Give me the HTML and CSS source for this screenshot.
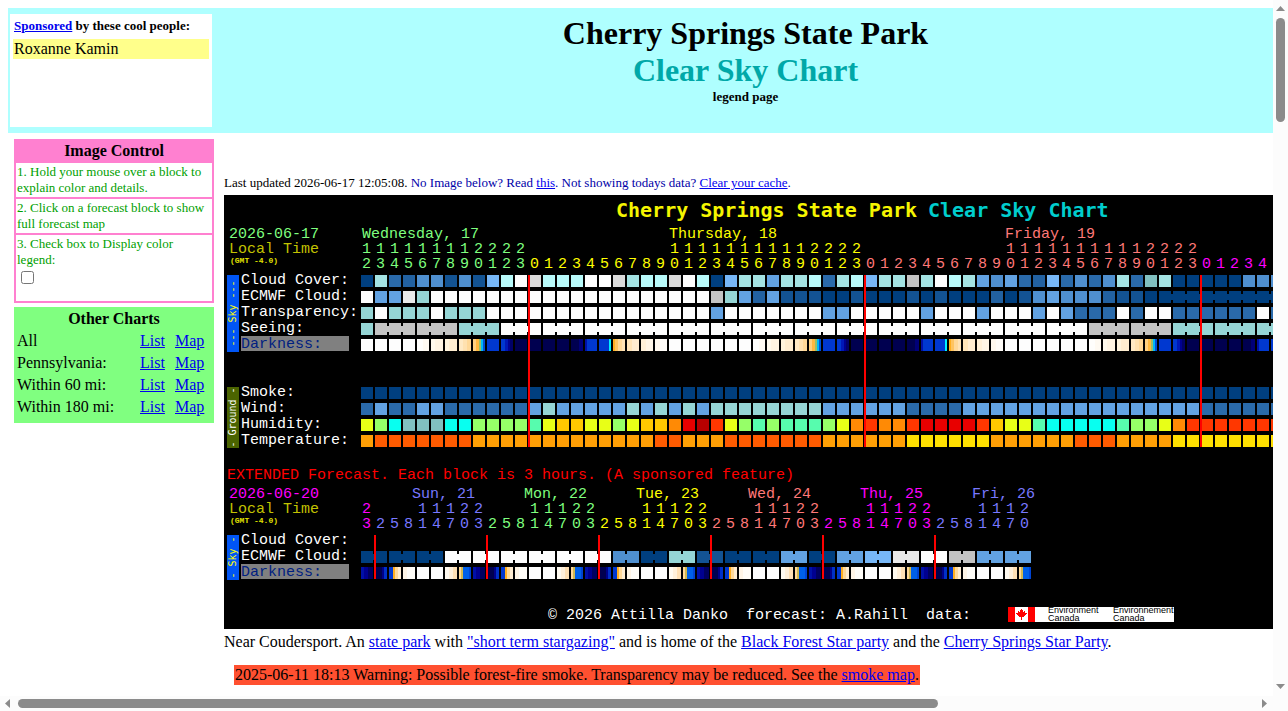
FILE: index.html
```html
<!DOCTYPE html>
<html lang="en">
<head>
<meta charset="utf-8">
<title>Cherry Springs State Park Clear Sky Chart</title>
<link rel="stylesheet" href="styles.css">
</head>
<body>
<div class="window">
  <div class="page">
    <header class="banner">
      <section class="sponsors">
        <p class="sponsors-title"><a href="#">Sponsored</a> by these cool people:</p>
        <p class="sponsor">Roxanne Kamin</p>
      </section>
      <div class="heading">
        <h1>Cherry Springs State Park<br><span class="teal">Clear Sky Chart</span></h1>
        <p class="legend">legend page</p>
      </div>
    </header>
    <div class="columns">
      <aside class="side">
        <section class="control">
          <h2>Image Control</h2>
          <p class="step">1. Hold your mouse over a block to explain color and details.</p>
          <p class="step">2. Click on a forecast block to show full forecast map</p>
          <div class="step step-check">
            <label for="legend">3. Check box to Display color legend:</label>
            <input type="checkbox" id="legend">
          </div>
        </section>
        <section class="charts">
          <h2>Other Charts</h2>
          <table>
            <tr><td>All</td><td><a href="#">List</a></td><td><a href="#">Map</a></td></tr>
            <tr><td>Pennsylvania:</td><td><a href="#">List</a></td><td><a href="#">Map</a></td></tr>
            <tr><td>Within 60 mi:</td><td><a href="#">List</a></td><td><a href="#">Map</a></td></tr>
            <tr><td>Within 180 mi:</td><td><a href="#">List</a></td><td><a href="#">Map</a></td></tr>
          </table>
        </section>
      </aside>
      <main class="main">
        <p class="updated">Last updated 2026-06-17 12:05:08. <span class="hint">No Image below? Read <a href="#">this</a>. Not showing todays data? <a href="#">Clear your cache</a>.</span></p>
        <svg class="chart" id="chart" width="1490" height="434" role="img" aria-label="Clear Sky Chart"></svg>
        <p class="about">Near Coudersport. An <a href="#">state park</a> with <a href="#">"short term stargazing"</a> and is home of the <a href="#">Black Forest Star party</a> and the <a href="#">Cherry Springs Star Party</a>.</p>
        <p class="warning">2025-06-11 18:13 Warning: Possible forest-fire smoke. Transparency may be reduced. See the <a href="#">smoke map</a>.</p>
      </main>
    </div>
  </div>
  <div class="bar bar-v">
    <svg width="15" height="15"><path d="M3 11L7.500 6L12 11Z"/></svg>
    <div class="track"><div class="thumb"></div></div>
    <svg width="15" height="15"><path d="M3 3L12 3L7.500 8Z"/></svg>
  </div>
  <div class="bar bar-h">
    <svg width="15" height="15"><path d="M10 3L5 7.500L10 12Z"/></svg>
    <div class="track"><div class="thumb"></div></div>
    <svg width="15" height="15"><path d="M4 3L9 7.500L4 12Z"/></svg>
  </div>
  <div class="corner"></div>
</div>
<script src="chart.js"></script>
</body>
</html>
```

FILE: styles.css
```css
* { box-sizing: border-box; }
body {
  margin: 0;
  font-family: "Liberation Serif", serif;
  font-size: 16px;
  line-height: 18px;
  color: #000;
  background: #fff;
}
p, h1, h2 { margin: 0; }
h2 { font-size: 16px; text-align: center; }
a { color: #00e; }

.window {
  display: grid;
  grid-template-columns: minmax(0, 1fr) 15px;
  grid-template-rows: minmax(0, 1fr) 15px;
  height: 100vh;
}
.page { overflow: hidden; padding: 8px 0 0 8px; }

.banner {
  display: flex;
  min-height: 125px;
  background: #afffff;
  padding: 6px 0 6px 2px;
}
.sponsors {
  flex: none;
  width: 202px;
  background: #fff;
  padding: 3px;
}
.sponsors-title { font-size: 13px; font-weight: bold; padding: 0 1px 4px; }
.sponsor { background: #ffff8b; padding: 1px; }
.heading { flex: 1; text-align: center; padding: 1px 0 0 6px; }
h1 { font-size: 32px; line-height: 37px; }
.teal { color: #00a8a8; }
.legend { font-size: 13px; font-weight: bold; line-height: 16px; }

.columns { display: flex; padding-left: 6px; }
.side { flex: none; width: 200px; padding-top: 6px; }
.control {
  display: flex;
  flex-direction: column;
  gap: 2px;
  background: #ff80d0;
  padding: 2px;
}
.control h2 { line-height: 20px; }
.step {
  background: #fff;
  color: #00a000;
  font-size: 13px;
  line-height: 16px;
  padding: 1px;
}
.step-check { display: flex; flex-direction: column; align-items: flex-start; min-height: 66px; }
.step-check input { margin: 3px 4px; width: 13px; height: 13px; }
.charts { margin-top: 4px; background: #80ff80; padding: 3px 2px 5px; }
.charts table { width: 100%; border-spacing: 0; }
.charts h2 { padding-bottom: 2px; }
.charts td { padding: 2px 1px; height: 22px; }
.charts td:nth-child(2) { width: 35px; }
.charts td:nth-child(3) { width: 38px; }

.main { flex: 1; min-width: 0; padding: 41px 0 0 10px; }
.updated { font-size: 13px; padding-bottom: 3px; white-space: nowrap; }
.hint { color: #0000a8; }
.chart { display: block; background: #000; }
.about { padding-top: 4px; white-space: nowrap; }
.warning {
  width: fit-content;
  margin: 14px 0 0 10px;
  padding: 1px;
  background: #ff5030;
  white-space: nowrap;
}

.chart text {
  font-family: "Liberation Mono", monospace;
  font-size: 15px;
  white-space: pre;
}
.chart .title { font-family: "DejaVu Sans Mono", monospace; font-size: 20px; font-weight: bold; }
.chart .zone { font-size: 8px; font-weight: bold; }
.chart .side-label { font-family: "DejaVu Sans Mono", monospace; font-size: 10px; text-anchor: middle; }
.chart .agency { font-family: "Liberation Sans", sans-serif; font-size: 9px; }

.bar { display: flex; background: #fcfcfc; }
.bar svg { flex: none; fill: #8b8b8b; }
.bar .track { flex: 1; display: flex; padding: 3px; }
.bar-v { flex-direction: column; }
.bar-v .track { flex-direction: column; }
.thumb { background: #8b8b8b; border-radius: 5px; }
.bar-v .thumb { height: 15.8%; }
.bar-h .thumb { width: 74.4%; }
.corner { background: #fcfcfc; }
```

FILE: chart.js
```js
const chart = document.getElementById("chart");
const NS = "http://www.w3.org/2000/svg";

const GREEN = "#7fff7f", YELLOW = "#ffff00", SALMON = "#ff7878";
const MAGENTA = "#ff00ff", BLUE = "#7878ff", OLIVE = "#c3c300";

const COLORS = {
  a: "#003f7f", b: "#135393", s: "#2261a1", c: "#2a6aaa", d: "#4f8fcf",
  e: "#62a2e2", f: "#77b7f7", g: "#95d5d5", h: "#a4e3e3", i: "#b8fafa",
  j: "#e9e9e9", k: "#fdfdfd", l: "#c3c3c3", m: "#dadada", n: "#81c0c0",
  y: "#e8ff17", v: "#96ff68", w: "#08fff0", t: "#57fcae", o: "#ffc800",
  O: "#ff8a05", R: "#e80000", D: "#b80000", r: "#ff3700",
  p: "#ff9f05", q: "#ff5b00", Y: "#ffdf00"
};

function add(tag, attrs, content) {
  const el = document.createElementNS(NS, tag);
  for (const key in attrs) el.setAttribute(key, attrs[key]);
  if (content !== undefined) el.textContent = content;
  chart.appendChild(el);
  return el;
}
function text(x, y, fill, content, cls) {
  add("text", { x, y, fill, class: cls || "label" }, content);
}
function rect(x, y, width, height, fill) {
  add("rect", { x, y, width, height, fill });
}
const columnX = i => 137 + 14 * i;

function row(y, codes, joined) {
  [...codes].forEach((code, i) => {
    rect(columnX(i), y, 12, 12, COLORS[code]);
    if (joined && joined(i)) rect(columnX(i) + 12, y + 3, 2, 6, COLORS[code]);
  });
}
/* Each stop is [width, color]; the widths of a block add up to 12. */
function striped(i, y, stops) {
  let x = columnX(i);
  for (const [width, color] of stops) {
    rect(x, y, width, 12, color);
    x += width;
  }
}

/* Titles */
text(392, 22, "#f5f500", "Cherry Springs State Park", "title");
text(704, 22, "#00cdcd", "Clear Sky Chart", "title");

function corner(date, color, y) {
  text(5, y, color, date);
  text(5, y + 15, OLIVE, "Local Time");
  text(6, y + 25, "#e0e000", "(GMT -4.0)", "zone");
}
function hour(i, h, color, y) {
  const digits = String(h);
  if (h > 9) text(columnX(i) + 1, y, color, digits[0]);
  text(columnX(i) + 1, y + 15, color, digits[digits.length - 1]);
}
function sideLabel(y, height, fill, color, content) {
  rect(3, y, 12, height, fill);
  const middle = y + height / 2;
  add("text", { x: 12, y: middle, fill: color, class: "side-label",
    transform: `rotate(-90 12 ${middle})` }, content);
}
function labels(y, names) {
  names.forEach((name, i) => {
    const dark = name === "Darkness:";
    if (dark) rect(17, y + 16 * i - 12, 108, 15, "#808080");
    text(17, y + 16 * i, dark ? "#002080" : "#ffffff", name);
  });
}

/* Hourly forecast */
corner("2026-06-17", GREEN, 43);
text(138, 43, GREEN, "Wednesday, 17");
text(445, 43, YELLOW, "Thursday, 18");
text(781, 43, SALMON, "Friday, 19");
const dayColors = [GREEN, YELLOW, SALMON, MAGENTA];
for (let i = 0; i < 65; i++) hour(i, (i + 12) % 24, dayColors[Math.floor((i + 12) / 24)], 58);

labels(89, ["Cloud Cover:", "ECMWF Cloud:", "Transparency:", "Seeing:", "Darkness:"]);
labels(201, ["Smoke:", "Wind:", "Humidity:", "Temperature:"]);
sideLabel(80, 77, "#0055f5", "#ffff00", "--- Sky ---");
sideLabel(192, 61, "#4b6400", "#ffffff", "- Ground -");

const r = (code, n) => code.repeat(n);
row(80, "ahcsddbdbfikmiii" + "kkmhiimkiafhhehhichifhhlh" + "kihedecsfcdcdhcnhaaaaaddd");
row(96, "keejg" + r("k", 20) + "lgesebbbaabaaaba" + "baaasabdedddsbb" + r("a", 10), i => i > 56);
row(112, "gkgggkggg" + r("k", 16) + "e" + r("k", 7) + "ee" + r("k", 5) + "ekkkekkkekeccckckkcccccckc");
row(128, "g" + r("l", 6) + "ggg" + r("k", 42) + r("l", 6) + r("g", 8), i => i > 0 && i % 3 !== 0);
row(192, r("a", 66));
row(208, "ceccee" + r("c", 6) + "egeeeeegegege" + r("g", 8) + r("e", 6) + "cccc" + r("e", 17) + r("c", 6));
row(224, "yvwnnnwwvvvvtyooyyvyooORDryvtvtttvyOrOOrRRRRroyytwwwwwtvvyO" + r("r", 7));
row(240, "p" + r("q", 7) + r("p", 13) + "qqppp" + r("q", 7) + r("p", 6) + r("Y", 6) + r("p", 6) + "qqqpppp" + r("Y", 8));

const NAVY = "#000050", ROYAL = "#0038d0";
const hourly = {
  4: [[6, "#fffefc"], [6, "#fffaf2"]],
  5: [[4, "#fff9ec"], [8, "#fff4e2"]],
  6: [[4, "#fff4dd"], [8, "#ffedd0"]],
  7: [[4, "#ffe9c4"], [4, "#ffe1b0"], [4, "#ffd898"]],
  8: [[3, "#ffd080"], [3, "#ffb840"], [2, "#98c068"], [2, "#00b8f8"], [2, "#0050d8"]],
  9: [[12, ROYAL]],
  10: [[4, ROYAL], [3, "#0018b8"], [2, "#000090"], [3, "#000068"]],
  15: [[8, NAVY], [4, "#000078"]],
  16: [[2, "#0010a8"], [10, ROYAL]],
  17: [[10, ROYAL], [2, "#00f0ff"]],
  18: [[2, "#ffae20"], [3, "#ffc460"], [4, "#ffd898"], [3, "#ffe2b4"]],
  19: [[5, "#ffe4b8"], [7, "#ffecd0"]],
  20: [[5, "#fff0d8"], [7, "#fff5e6"]],
  21: [[5, "#fff8ee"], [7, "#fffcf8"]]
};
for (let i = 0; i < 66; i++) {
  const phase = i % 24;
  const night = phase > 10 && phase < 15;
  striped(i, 144, hourly[phase] || [[12, night ? NAVY : "#fdfdfd"]]);
}
[304, 640, 976].forEach(x => rect(x, 80, 2, 172, "#ff0000"));

/* Extended forecast */
text(3, 284, "#ff0000", "EXTENDED Forecast. Each block is 3 hours. (A sponsored feature)");
corner("2026-06-20", MAGENTA, 303);
const days = [["Sun, 21", BLUE], ["Mon, 22", GREEN], ["Tue, 23", YELLOW],
  ["Wed, 24", SALMON], ["Thu, 25", MAGENTA], ["Fri, 26", BLUE]];
days.forEach(([name, color], i) => text(188 + 112 * i, 303, color, name));
for (let i = 0; i < 48; i++) {
  hour(i, (23 + 3 * i) % 24, i ? days[Math.floor((i - 1) / 8)][1] : MAGENTA, 318);
}
labels(349, ["Cloud Cover:", "ECMWF Cloud:", "Darkness:"]);
sideLabel(340, 45, "#0055f5", "#ffff00", "- Sky -");

row(356, [..."aaakkkkkkdagbaaeaefjklee"].map(c => c + c).join(""), i => i % 2 === 0);
const threeHourly = [
  [[3, "#0010a8"], [4, "#000090"], [5, "#000060"]],
  [[7, NAVY], [2, "#000088"], [3, "#0030c8"]],
  [[4, ROYAL], [2, "#ffae20"], [3, "#ffd898"], [3, "#ffecd0"]],
  [[4, "#fff5e6"], [8, "#fffdf8"]],
  [[12, "#fdfdfd"]],
  [[12, "#fdfdfd"]],
  [[4, "#fffaf0"], [4, "#fff0da"], [4, "#ffe0b4"]],
  [[2, "#ffd898"], [2, "#d0b850"], [6, "#0060e8"], [2, "#0044d4"]]
];
for (let i = 0; i < 48; i++) striped(i, 372, threeHourly[i % 8]);
for (let i = 0; i < 6; i++) rect(150 + 112 * i, 340, 2, 44, "#ff0000");

/* Credits */
text(324, 424, "#ffffff", "© 2026 Attilla Danko  forecast: A.Rahill  data:");
rect(784, 412, 166, 15, "#ffffff");
rect(784, 412, 7, 15, "#ff0000");
rect(804, 412, 7, 15, "#ff0000");
add("path", { fill: "#ff0000",
  d: "M797 414h1v1h1v2h1v-1h1v2h2v1h-1v1h-1v1h-1v1h-2v3h-1v-3h-2v-1h-1v-1h-1v-1h-1v-1h2v-2h1v1h1v-2h1z" });
text(824, 418, "#000000", "Environment", "agency");
text(824, 426, "#000000", "Canada", "agency");
text(889, 418, "#000000", "Environnement", "agency");
text(889, 426, "#000000", "Canada", "agency");
```
